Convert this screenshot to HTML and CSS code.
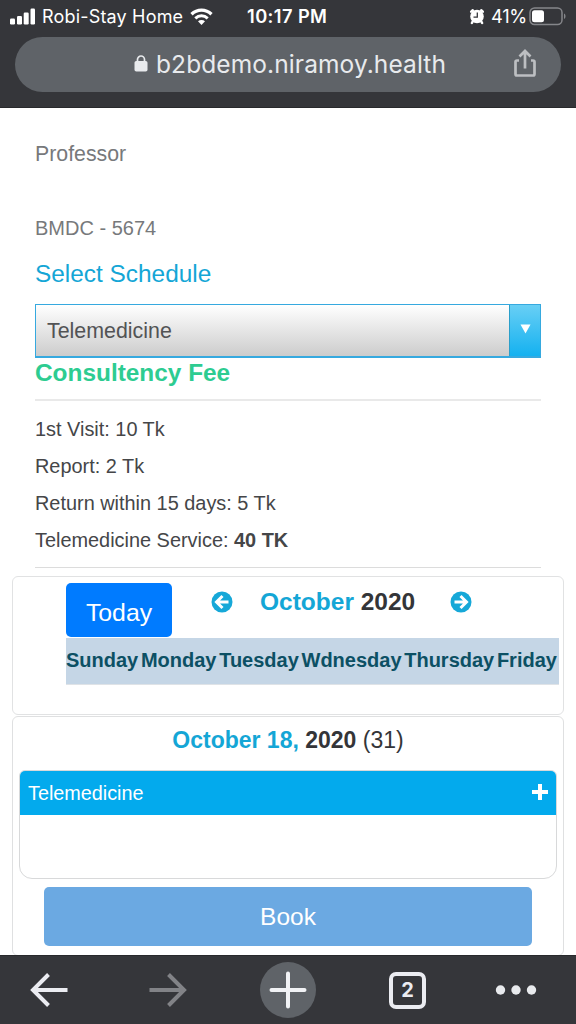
FILE: index.html
```html
<!DOCTYPE html>
<html lang="en">
<head>
<meta charset="utf-8">
<title>Select Schedule</title>
<link rel="stylesheet" href="styles.css">
</head>
<body>
<div class="phone">
  <header class="chrome">
    <div class="status">
      <div class="status-left">
        <svg class="signal" width="26" height="17" viewBox="0 0 26 17" fill="#fff"><rect x="0" y="10.500" width="5" height="6" rx="1.200"/><rect x="7" y="8" width="5" height="8.500" rx="1.200"/><rect x="13.700" y="4.500" width="5" height="12" rx="1.200"/><rect x="20.500" y="0.500" width="4.500" height="16" rx="1.200"/></svg>
        <span class="carrier">Robi-Stay Home</span>
        <svg class="wifi" width="23" height="17" viewBox="0 0 23 17"><path d="M1.500 6.200C7.200.7 15.800.7 21.500 6.200" fill="none" stroke="#fff" stroke-width="3.300"/><path d="M5.300 10.300c3.600-3.300 8.800-3.300 12.400 0" fill="none" stroke="#fff" stroke-width="3"/><path d="M8 13.200c2-1.700 5-1.700 7 0L11.500 17z" fill="#fff"/></svg>
      </div>
      <span class="clock">10:17 PM</span>
      <div class="status-right">
        <svg width="16" height="17" viewBox="0 0 16 17"><circle cx="8" cy="8.500" r="6.800" fill="#fff"/><path d="M2.200 3.600 3.800 2.200M13.800 3.600 12.200 2.200M3.700 13.500l-.8 1.500M12.300 13.500l.8 1.500" stroke="#fff" stroke-width="2.500" stroke-linecap="round"/><path d="M8.300 4.500v4.700H4.500" fill="none" stroke="#35363a" stroke-width="1.300"/></svg>
        <span class="percent">41%</span>
        <svg class="battery" width="37" height="19" viewBox="0 0 37 19"><rect x="1" y="1" width="32" height="16.500" rx="4.500" fill="none" stroke="#85868a" stroke-width="1.500"/><rect x="3" y="3.300" width="12" height="12" rx="2.500" fill="#fff"/><path d="M35 6.500c2 .8 2 4.700 0 5.500z" fill="#85868a"/></svg>
      </div>
    </div>
    <div class="address">
      <svg class="lock" width="14" height="17" viewBox="0 0 14 17"><rect x=".5" y="6" width="13" height="10.500" rx="1.800" fill="#e8eaed"/><path d="M3.500 7V4.500a3.500 3.500 0 0 1 7 0V7" fill="none" stroke="#e8eaed" stroke-width="1.700"/></svg>
      <span class="url">b2bdemo.niramoy.health</span>
      <svg class="share" width="24" height="29" viewBox="0 0 24 29" fill="none" stroke="#bdbfc2" stroke-width="2.700"><path d="M6 11.500H4Q2.500 11.500 2.500 13V25Q2.500 26.500 4 26.500H20Q21.500 26.500 21.500 25V13Q21.500 11.500 20 11.500H18M12 19.500V3M6.500 7.500 12 2l5.500 5.500"/></svg>
    </div>
  </header>

  <main class="page">
    <section class="doctor">
      <p class="title">Professor</p>
      <p class="bmdc">BMDC - 5674</p>
      <h2 class="select-title">Select Schedule</h2>
      <div class="select"><span class="select-value">Telemedicine</span><span class="select-arrow"><svg width="11" height="10" viewBox="0 0 11 10"><path d="M.5.500h10l-5 9z" fill="#fff"/></svg></span></div>
      <h3 class="fee-title">Consultency Fee</h3>
      <div class="fees">
        <p class="fee visit">1st Visit: 10 Tk</p>
        <p class="fee report">Report: 2 Tk</p>
        <p class="fee return">Return within 15 days: 5 Tk</p>
        <p class="fee service">Telemedicine Service: <b>40 TK</b></p>
      </div>
    </section>

    <section class="calendar">
      <div class="month-row">
        <button class="today">Today</button>
        <svg class="prev" width="22" height="22" viewBox="0 0 22 22"><circle cx="11" cy="11" r="10.500" fill="#16a8d8"/><path d="M17.500 11H6M11.500 5 5.500 11l6 6" fill="none" stroke="#fff" stroke-width="3"/></svg>
        <span class="month"><em>October</em> 2020</span>
        <svg class="next" width="22" height="22" viewBox="0 0 22 22"><circle cx="11" cy="11" r="10.500" fill="#16a8d8"/><path d="M4.500 11H16M10.500 5l6 6-6 6" fill="none" stroke="#fff" stroke-width="3"/></svg>
      </div>
      <div class="weekdays"><span>Sunday</span><span>Monday</span><span>Tuesday</span><span>Wdnesday</span><span>Thursday</span><span>Friday</span></div>
    </section>

    <section class="booking">
      <h3 class="date"><em>October 18,</em> 2020 <small>(31)</small></h3>
      <div class="slot">
        <div class="slot-head"><span>Telemedicine</span><svg class="expand" width="16" height="16" viewBox="0 0 16 16"><path d="M8 2v12M2 8h12" stroke="#fff" stroke-width="4" stroke-linecap="square"/></svg></div>
      </div>
      <button class="book">Book</button>
    </section>
  </main>

  <nav class="toolbar">
    <div class="tool"><svg width="40" height="36" viewBox="0 0 40 36" fill="none" stroke="#ebecf1" stroke-width="4"><path d="M38.500 18H4M19.500 2.500 4 18l15.500 15.500"/></svg></div>
    <div class="tool"><svg width="40" height="36" viewBox="0 0 40 36" fill="none" stroke="#828387" stroke-width="4"><path d="M1.500 18H36M20.500 2.500 36 18 20.500 33.500"/></svg></div>
    <div class="tool"><span class="add"><svg width="38" height="38" viewBox="0 0 38 38" stroke="#f1f2f5" stroke-width="4" stroke-linecap="round"><path d="M19 2.500v33M2.500 19h33"/></svg></span></div>
    <div class="tool"><span class="tabs">2</span></div>
    <div class="tool"><svg width="42" height="12" viewBox="0 0 42 12" fill="#e8eaed"><circle cx="5.500" cy="6" r="4.700"/><circle cx="21" cy="6" r="4.700"/><circle cx="36.500" cy="6" r="4.700"/></svg></div>
  </nav>
</div>
</body>
</html>
```
FILE: styles.css
```css
* { box-sizing: border-box; }
body, p, h2, h3 { margin: 0; }
body { font-family: "Liberation Sans", Arial, sans-serif; background: #fff; color: #454648; }
svg { display: block; flex: none; }
button { border: 0; padding: 0; margin: 0; color: #fff; font-family: inherit; }
em { font-style: normal; color: #14a6d6; }
.phone { width: 576px; height: 1024px; display: flex; flex-direction: column; overflow: hidden; white-space: nowrap; }

.chrome { height: 108px; flex: none; background: #35363a; border-bottom: 1px solid #28292c; font-family: Inter, "Liberation Sans", sans-serif; color: #fff; }
.status { height: 37px; display: grid; grid-template-columns: 220px 135px 1fr; padding: 0 6px 5px 10px; align-items: center; }
.status-left, .status-right { display: flex; align-items: center; }
.carrier { margin-left: 6px; width: 142px; font-size: 18px; letter-spacing: .18px; }
.wifi { margin-left: 6px; }
.clock { font-size: 18.300px; font-weight: 600; padding-left: 17px; letter-spacing: .4px; }
.status-right { padding-left: 104px; }
.percent { width: 36px; font-size: 18.300px; margin-left: 6px; letter-spacing: -.3px; }
.battery { margin-left: 2px; }
.address { height: 55px; margin: 0 15px; border-radius: 28px; background: #5f6368; display: flex; align-items: center; padding: 0 24px 2px 119px; color: #e8eaed; }
.url { font-size: 24.500px; margin-left: 8px; letter-spacing: .1px; }
.share { margin-left: auto; }

.page { flex: 1; min-height: 0; padding: 0 12px; overflow: hidden; }
.doctor { padding: 28px 23px 0; }
.title, .bmdc { color: #77797b; height: 37px; line-height: 37px; font-size: 20px; }
.title { font-size: 21.300px; }
.bmdc { margin-top: 37px; }
.select-title { height: 49px; line-height: 54px; font-size: 24.400px; font-weight: 400; color: #14a6d6; margin-bottom: 8px; }
.select { height: 54px; border: 2px solid #36a9df; border-left-width: 1px; border-right-width: 1px; border-top-width: 1px; background: linear-gradient(#fff, #ccc); display: flex; align-items: center; color: #525355; }
.select-value { flex: 1; padding: 1px 0 0 11px; font-size: 21.400px; }
.select-arrow { width: 31px; align-self: stretch; border-left: 1px solid #2b9fca; background: linear-gradient(#68cff5, #14b1f0); display: flex; justify-content: center; padding-top: 19px; }
.fee-title { height: 43px; line-height: 29px; color: #2dcc91; font-size: 24.400px; border-bottom: 2px solid #e9e9e9; }
.fees { border-bottom: 1px solid #dcdcdc; padding: 10px 0 8px; }
.fee { height: 37px; line-height: 37px; font-size: 19.900px; }

.calendar { height: 139px; margin-top: 8px; border: 1px solid #e1e2e3; border-radius: 6px; padding: 6px 4px 0 53px; }
.month-row { height: 55px; display: flex; align-items: flex-start; }
.today { width: 106px; height: 54px; border-radius: 5px; background: #007bff; font-size: 24.800px; padding-top: 6px; }
.prev { margin: 8px 0 0 39px; }
.month { width: 157px; margin: 4px 0 0 27px; font-size: 24.500px; line-height: 30px; font-weight: 700; color: #343538; }
.next { margin: 8px 0 0 33px; }
.weekdays { height: 47px; border-bottom: 1px solid #dfe3e7; background: #c5d6e6; display: flex; justify-content: space-between; align-items: center; font-size: 20px; font-weight: 700; color: #0c5064; padding: 0 2px 1px 0; }
.booking { height: 240px; margin-top: 1px; border: 1px solid #dfe0e1; border-radius: 6px; padding: 0 6px; }
.date { text-align: center; height: 53px; line-height: 46px; font-size: 23px; color: #343538; }
.date small { font-size: 23px; font-weight: 400; }
.slot { height: 109px; border: 1px solid #d8d9da; border-radius: 6px 6px 13px 13px; }
.slot-head { height: 44px; background: #03aaed; border-radius: 5px 5px 0 0; display: flex; align-items: center; justify-content: space-between; padding: 0 8px; color: #fff; font-size: 19.800px; }
.expand { margin-bottom: 2px; }
.book { display: block; width: 488px; height: 59px; margin: 8px auto 0; border-radius: 5px; background: #6ba9e2; font-size: 24.500px; padding-top: 1px; }

.toolbar { height: 69px; flex: none; background: #35363a; border-top: 1px solid #28292c; display: grid; grid-template-columns: 98px 140px 100px 139px 78px; }
.tool { display: flex; align-items: center; justify-content: center; }
.add { width: 56px; height: 56px; border-radius: 50%; background: #5f6368; display: flex; align-items: center; justify-content: center; }
.tabs { width: 37px; height: 37px; border: 4px solid #ebecf1; border-radius: 7px; display: flex; align-items: center; justify-content: center; font: 700 20px Inter, sans-serif; color: #ebecf1; }
```
